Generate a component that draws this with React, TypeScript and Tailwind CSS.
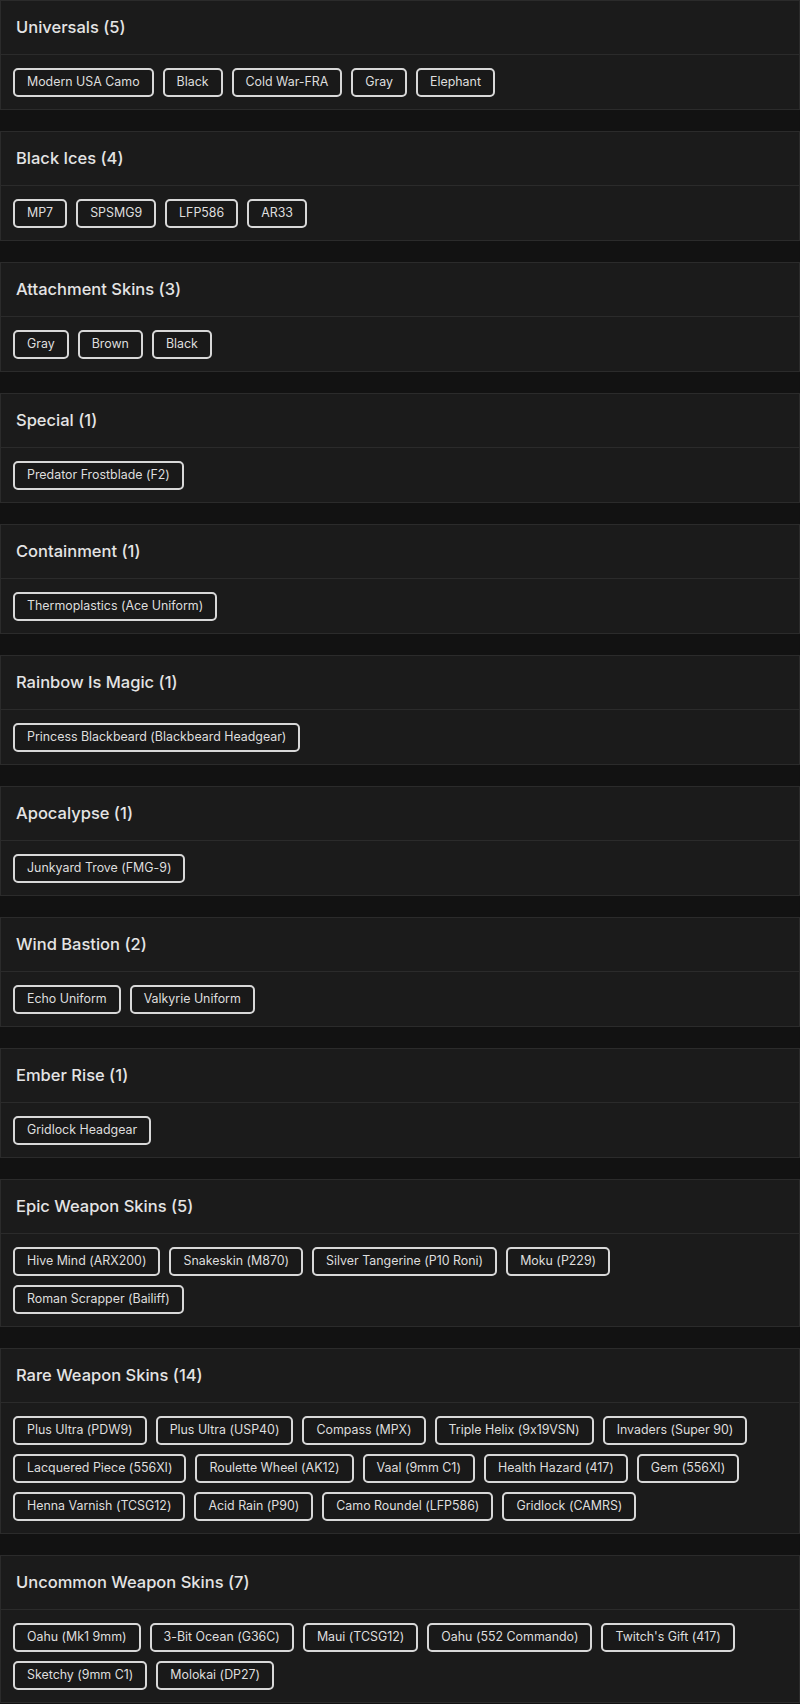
import React from "react";

const sections: { title: string; items: string[] }[] = [
  { title: "Universals", items: ["Modern USA Camo", "Black", "Cold War-FRA", "Gray", "Elephant"] },
  { title: "Black Ices", items: ["MP7", "SPSMG9", "LFP586", "AR33"] },
  { title: "Attachment Skins", items: ["Gray", "Brown", "Black"] },
  { title: "Special", items: ["Predator Frostblade (F2)"] },
  { title: "Containment", items: ["Thermoplastics (Ace Uniform)"] },
  { title: "Rainbow Is Magic", items: ["Princess Blackbeard (Blackbeard Headgear)"] },
  { title: "Apocalypse", items: ["Junkyard Trove (FMG-9)"] },
  { title: "Wind Bastion", items: ["Echo Uniform", "Valkyrie Uniform"] },
  { title: "Ember Rise", items: ["Gridlock Headgear"] },
  {
    title: "Epic Weapon Skins",
    items: ["Hive Mind (ARX200)", "Snakeskin (M870)", "Silver Tangerine (P10 Roni)", "Moku (P229)", "Roman Scrapper (Bailiff)"],
  },
  {
    title: "Rare Weapon Skins",
    items: [
      "Plus Ultra (PDW9)",
      "Plus Ultra (USP40)",
      "Compass (MPX)",
      "Triple Helix (9x19VSN)",
      "Invaders (Super 90)",
      "Lacquered Piece (556XI)",
      "Roulette Wheel (AK12)",
      "Vaal (9mm C1)",
      "Health Hazard (417)",
      "Gem (556XI)",
      "Henna Varnish (TCSG12)",
      "Acid Rain (P90)",
      "Camo Roundel (LFP586)",
      "Gridlock (CAMRS)",
    ],
  },
  {
    title: "Uncommon Weapon Skins",
    items: ["Oahu (Mk1 9mm)", "3-Bit Ocean (G36C)", "Maui (TCSG12)", "Oahu (552 Commando)", "Twitch's Gift (417)", "Sketchy (9mm C1)", "Molokai (DP27)"],
  },
];

export default function App() {
  return (
    <div
      className="min-h-[1704px] w-[800px] bg-[#121212] flex flex-col gap-[21px] [font-feature-settings:'calt'_0]"
      style={{ fontFamily: "Inter, 'Open Sans', sans-serif" }}
    >
      {sections.map((s) => (
        <div key={s.title} className="bg-[#1b1b1b] border border-[#2b2b2b]">
          <div className="h-[54px] px-[15px] flex items-center border-b border-[#2b2b2b]">
            <span className="text-[16.5px] font-medium text-[#e4e4e4]">
              {s.title} ({s.items.length})
            </span>
          </div>
          <div className="px-3 pt-[13px] pb-[12px] flex flex-wrap gap-x-[9px] gap-y-[9px]">
            {s.items.map((it, i) => (
              <div
                key={i}
                className="h-[29px] px-3 flex items-center border-2 border-[#d8d8d8] rounded-[5px] bg-[#191919] text-[12.4px] text-[#dedede] whitespace-nowrap"
              >
                {it}
              </div>
            ))}
          </div>
        </div>
      ))}
    </div>
  );
}
